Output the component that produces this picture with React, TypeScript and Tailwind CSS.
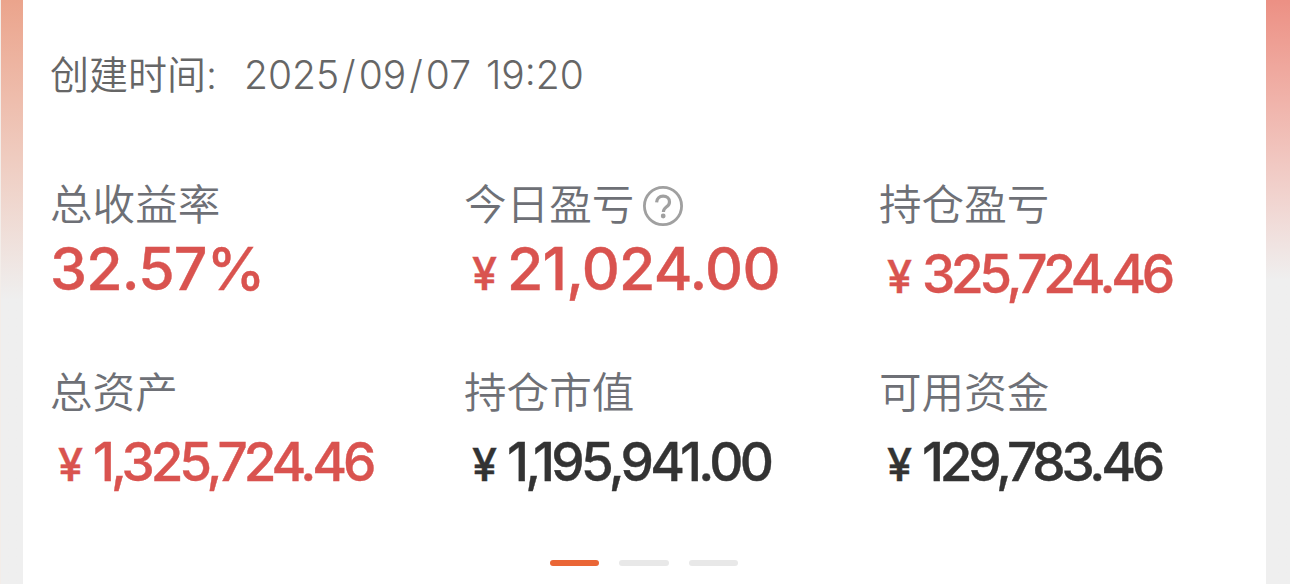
type StatProps = {
    label: string
    value: string
    currency?: boolean
    help?: boolean
    valueClass: string
}

const HelpIcon = () => (
    <svg width="42" height="42" viewBox="0 0 42 42" fill="none" className="mt-px ml-2 shrink-0">
        <circle cx="21" cy="21" r="18.6" stroke="#a0a0a0" strokeWidth="2.8" />
        <path
            d="M14.6 17.4c.2-3.8 2.7-6.2 6.5-6.2 3.8 0 6.4 2.4 6.4 5.7 0 2.5-1.4 3.8-3.2 5.1-2 1.5-2.9 2.4-2.9 4.9"
            stroke="#a0a0a0"
            strokeWidth="3.2"
        />
        <circle cx="21.2" cy="31" r="2.4" fill="#a0a0a0" />
    </svg>
)

const Stat = ({ label, value, currency = true, help = false, valueClass }: StatProps) => (
    <div className="h-[188px] whitespace-nowrap">
        <div className="flex h-[52px] items-center text-[42.6px] leading-none font-[350] text-[#6e7076]">
            <span>{label}</span>
            {help && <HelpIcon />}
        </div>
        <div className={`flex items-baseline font-medium [-webkit-text-stroke:0.4px_currentColor] ${valueClass}`}>
            {currency && <span className="w-[43px] pl-2 text-[45px] tracking-normal">¥</span>}
            <span>{value}</span>
        </div>
    </div>
)

export default function App() {
    const large = "text-[59px] leading-[76px] tracking-[-0.8px] text-[#d9534f]"
    const small = "text-[53px] leading-[87px]"

    return (
        <div className="flex h-[584px] w-[1290px] overflow-hidden bg-[#efefef] font-['Inter','Noto_Sans_CJK_SC',sans-serif]">
            <div className="w-[23px] border-l border-[#f3ede9] bg-linear-to-b from-[#eba48c] to-[#efefef] to-[300px]" />
            <main className="w-[1243px] bg-white pl-[26px]">
                <div className="mt-[50px] flex h-[50px] items-center text-[39px] font-[350] whitespace-nowrap text-[#666]">
                    <span className="w-[195px] pl-px">创建时间:</span>
                    <span>
                        2025<span className="px-[3px]">/</span>09<span className="px-[3px]">/</span>07
                    </span>
                    <span className="ml-[15px]">19:20</span>
                </div>
                <div className="mt-[79px] grid grid-cols-[414px_415px_1fr] pl-px">
                    <Stat label="总收益率" value="32.57%" currency={false} valueClass={large} />
                    <Stat label="今日盈亏" value="21,024.00" help valueClass={large} />
                    <Stat label="持仓盈亏" value="325,724.46" valueClass={`${small} tracking-[-4.3px] text-[#d9534f]`} />
                    <Stat label="总资产" value="1,325,724.46" valueClass={`${small} tracking-[-4.1px] text-[#d9534f]`} />
                    <Stat label="持仓市值" value="1,195,941.00" valueClass={`${small} tracking-[-3.7px] text-[#333]`} />
                    <Stat label="可用资金" value="129,783.46" valueClass={`${small} tracking-[-4.2px] text-[#333]`} />
                </div>
                <div className="mt-[5px] flex gap-5 pl-[501px]">
                    <span className="h-1.5 w-[49px] rounded-full bg-[#ea6636]" />
                    <span className="h-1.5 w-[50px] rounded-full bg-[#e8e8e8]" />
                    <span className="h-1.5 w-[49px] rounded-full bg-[#e8e8e8]" />
                </div>
            </main>
            <div className="w-6 bg-linear-to-b from-[#ec9084] to-[#efefef] to-[280px]" />
        </div>
    )
}
